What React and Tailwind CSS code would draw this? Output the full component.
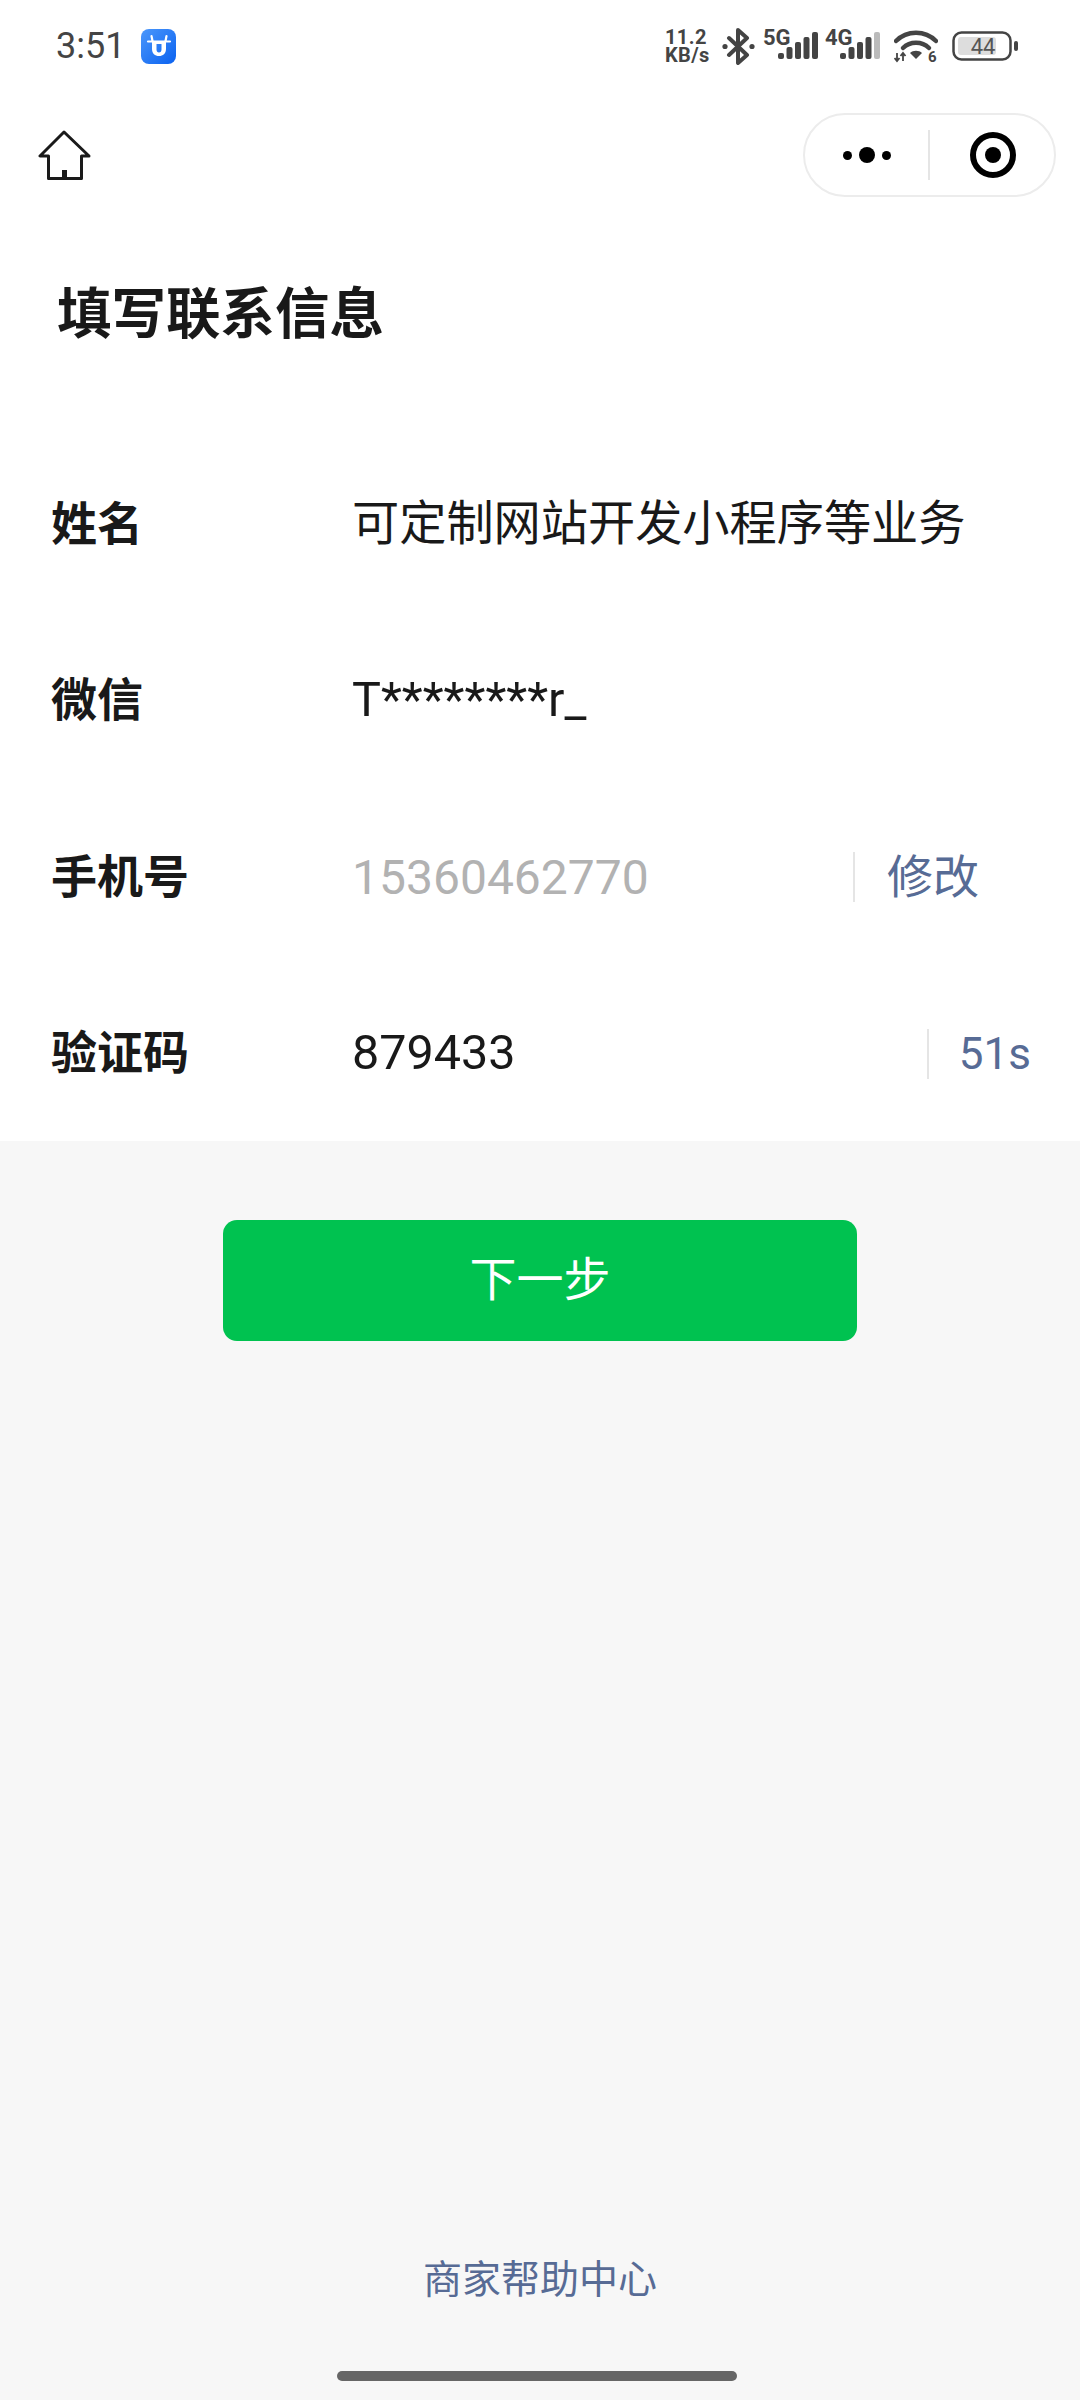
import React from 'react'

const FONT = 'font-["Roboto","Noto_Sans_CJK_SC",sans-serif]'

function Signal({ label, lastColor = '#444444' }) {
  const bars = [
    { x: 15, top: 25 },
    { x: 23.5, top: 19 },
    { x: 32, top: 14 },
    { x: 40.5, top: 9 },
    { x: 49, top: 4 },
  ]
  return (
    <svg width="57" height="44" viewBox="0 -8 57 44">
      <text x="0" y="17" fontSize="22" fontWeight="700" fill="#444444" fontFamily="Roboto, sans-serif">{label}</text>
      {bars.map((b, i) => (
        <rect key={b.x} x={b.x} y={b.top} width="6" height={31 - b.top} rx="2" fill={i === 4 ? lastColor : '#444444'} />
      ))}
    </svg>
  )
}

function Bluetooth() {
  return (
    <svg width="33" height="37" viewBox="0 0 33 37" fill="none">
      <path d="M7 10 L25 27 L16 35 V2 L25 10 L7 27" stroke="#444444" strokeWidth="4" strokeLinejoin="round" strokeLinecap="round" />
      <circle cx="3" cy="18.5" r="2.6" fill="#444444" />
      <circle cx="30" cy="18.5" r="2.6" fill="#444444" />
    </svg>
  )
}

function Wifi() {
  return (
    <svg width="44" height="40" viewBox="0 0 44 40" fill="none">
      <path d="M2 12 C13 1 31 1 42 12" stroke="#444444" strokeWidth="4.5" strokeLinecap="round" />
      <path d="M9 19 C16 12 28 12 35 19" stroke="#444444" strokeWidth="4.5" strokeLinecap="round" />
      <path d="M16 24 C19 21 25 21 28 24 L22 30 Z" fill="#444444" />
      <path d="M3 24 V32 M0.5 29 L3 32 L5.5 29 M9 32 V24 M6.5 27 L9 24 L11.5 27" stroke="#444444" strokeWidth="1.8" />
      <text x="34" y="33" fontSize="15" fontWeight="700" fill="#444444" fontFamily="Roboto, sans-serif">6</text>
    </svg>
  )
}

function Battery() {
  return (
    <svg width="66" height="30" viewBox="0 0 66 30" fill="none">
      <rect x="1.5" y="1.5" width="57" height="27" rx="8" stroke="#444444" strokeWidth="2.5" />
      <rect x="6" y="6" width="38" height="18" rx="3" fill="#dddddd" />
      <text x="31" y="23" textAnchor="middle" fontSize="22" fill="#555555" fontFamily="Roboto, sans-serif">44</text>
      <rect x="62" y="10" width="4" height="10" rx="2" fill="#444444" />
    </svg>
  )
}

function AppBadge() {
  return (
    <svg width="35" height="35" viewBox="0 0 35 35">
      <defs>
        <linearGradient id="badge" x1="0" y1="0" x2="1" y2="1">
          <stop offset="0" stopColor="#4b97fb" />
          <stop offset="1" stopColor="#0b62f0" />
        </linearGradient>
      </defs>
      <rect width="35" height="35" rx="8" fill="url(#badge)" />
      <path d="M11 12 H25 V20 C25 24.500 22 27 18 27 C14 27 11 24.500 11 20 Z M15.500 15 V20.500 C15.500 22.500 16.500 23.500 18 23.500 C19.500 23.500 20.500 22.500 20.500 20.500 V15 Z" fill="#ffffff" fillRule="evenodd" />
      <path d="M7 12.500 H29 M11.500 12 L10.500 7 M24.500 12 L25.500 7" stroke="#ffffff" strokeWidth="2.200" strokeLinecap="round" />
    </svg>
  )
}

function HomeIcon() {
  return (
    <svg width="53" height="51" viewBox="0 0 53 51" fill="none">
      <path d="M26 2 L2 26 H10.500 V48.500 H43.500 V26 H51 Z" stroke="#1a1a1a" strokeWidth="3" strokeLinejoin="round" />
      <rect x="24" y="40" width="5" height="9" fill="#1a1a1a" />
    </svg>
  )
}

function Row({ label, children }) {
  return (
    <div className="flex h-[176.5px] items-center pl-[51px]">
      <div className="w-[301px] shrink-0 text-[46px] font-bold text-[#191919]">{label}</div>
      {children}
    </div>
  )
}

export default function App() {
  return (
    <div className={`${FONT} flex h-[2400px] w-[1080px] flex-col overflow-hidden bg-[#f7f7f7]`}>
      <div className="h-[1141px] overflow-hidden bg-white">
        {/* status bar */}
        <div className="flex h-[92px] items-center pl-[56px] pr-[62px]">
          <span className="text-[36px] leading-none text-[#444444]">3:51</span>
          <div className="ml-[16px]"><AppBadge /></div>
          <div className="ml-auto flex w-[47px] flex-col text-[20px] font-bold leading-[18px] tracking-[0.4px] text-[#444444]">
            <span>11.2</span>
            <span>KB/s</span>
          </div>
          <div className="ml-[10px]"><Bluetooth /></div>
          <div className="mb-[8px] ml-[8px]"><Signal label="5G" /></div>
          <div className="mb-[8px] ml-[5px]"><Signal label="4G" lastColor="#bbbbbb" /></div>
          <div className="ml-[12px] mt-[6px]"><Wifi /></div>
          <div className="ml-[14px]"><Battery /></div>
        </div>

        {/* nav */}
        <div className="flex h-[126px] items-center justify-between pl-[38px] pr-[24px]">
          <HomeIcon />
          <div className="flex h-[84px] w-[253px] items-center rounded-full border-2 border-[#ececec] bg-white">
            <div className="flex w-[123px] items-center justify-center gap-[7px]">
              <span className="h-[9px] w-[9px] rounded-full bg-black" />
              <span className="h-[16px] w-[16px] rounded-full bg-black" />
              <span className="h-[9px] w-[9px] rounded-full bg-black" />
            </div>
            <div className="h-[50px] w-[2px] bg-[#e5e5e5]" />
            <div className="flex flex-1 items-center justify-center pl-[2px]">
              <div className="flex h-[46px] w-[46px] items-center justify-center rounded-full border-[6px] border-black">
                <span className="h-[16px] w-[16px] rounded-full bg-black" />
              </div>
            </div>
          </div>
        </div>

        {/* title */}
        <h1 className="mb-[92px] mt-[66px] pl-[57px] text-[54.5px] font-bold leading-[60px] text-[#191919]">填写联系信息</h1>

        {/* form */}
        <Row label="姓名">
          <span className="text-[47.2px] text-[#191919]">可定制网站开发小程序等业务</span>
        </Row>
        <Row label="微信">
          <span className="text-[48.5px] text-[#191919]">T********r_</span>
        </Row>
        <Row label="手机号">
          <span className="mt-[2px] text-[48px] text-[#b2b2b2]">15360462770</span>
          <div className="ml-auto h-[50px] w-[2px] bg-[#e5e5e5]" />
          <span className="ml-[32px] mr-[101px] text-[46px] text-[#576b95]">修改</span>
        </Row>
        <Row label="验证码">
          <span className="text-[48.5px] text-[#191919]">879433</span>
          <div className="ml-auto h-[50px] w-[2px] bg-[#e5e5e5]" />
          <span className="ml-[30px] mr-[49px] text-[44px] text-[#576b95]">51s</span>
        </Row>
      </div>

      <button className="ml-[223px] mt-[79px] h-[121px] w-[634px] rounded-[14px] bg-[#00c250] text-[47px] text-white">下一步</button>

      <div className="flex-1" />
      <div className="text-center text-[39px] leading-[50px] text-[#576b95]">商家帮助中心</div>
      <div className="mb-[19px] ml-[337px] mt-[66px] h-[10px] w-[400px] rounded-full bg-[#666666]" />
    </div>
  )
}
